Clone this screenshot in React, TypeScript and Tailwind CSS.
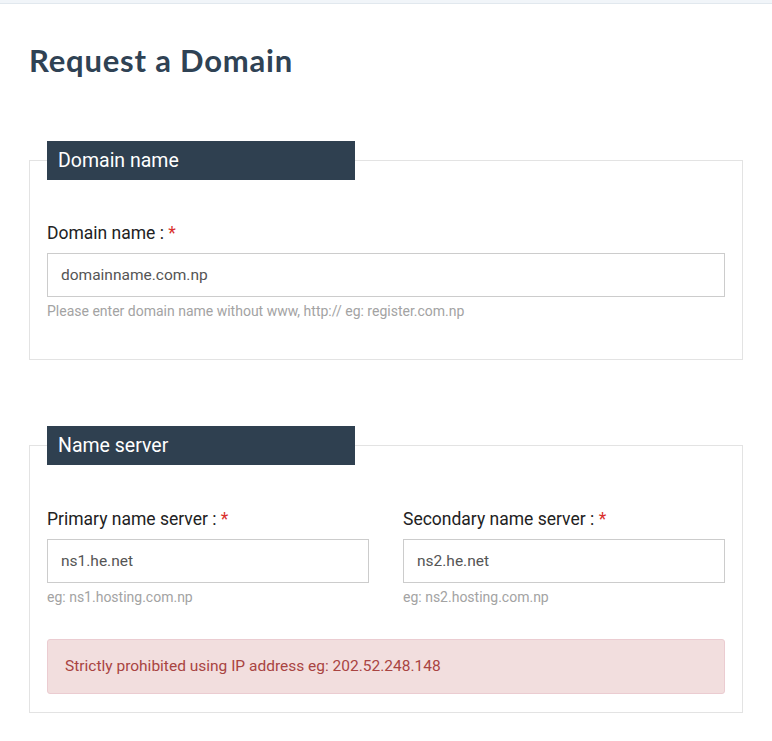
import React from 'react';

function Legend({ children }: { children: React.ReactNode }) {
  return (
    <legend className="w-[308px] h-[39px] bg-[#2f4050] px-[11px] text-[19.5px] leading-[39px] text-white">
      {children}
    </legend>
  );
}

function Field({
  label,
  value,
  help,
  className = '',
}: {
  label: string;
  value: string;
  help: string;
  className?: string;
}) {
  return (
    <div className={className}>
      <label className="block text-[17.5px] leading-[22px] text-[#222]">
        {label} : <span className="text-[#d9302c]">*</span>
      </label>
      <input
        readOnly
        value={value}
        className="mt-[9px] block h-[44px] w-full border border-[#cccccc] bg-white px-[13px] text-[15.5px] text-[#555] outline-none"
      />
      <p className="mt-[4px] text-[14px] leading-[20px] text-[#a3a3a3]">{help}</p>
    </div>
  );
}

export default function App() {
  return (
    <div className="min-h-[741px] bg-white font-['Roboto',sans-serif]">
      <div className="h-[4px] border-b border-[#e1e8ee] bg-[#f1f5f9]" />

      <div className="px-[29px]">
        <h1 className="mt-[34px] font-['Lato',sans-serif] text-[31px] font-bold leading-[44px] tracking-[0.8px] text-[#2f4254]">
          Request a Domain
        </h1>

        <fieldset className="mt-[59px] border border-[#e3e3e3] px-[17px] pb-[38px]">
          <Legend>Domain name</Legend>
          <Field
            className="mt-[42px]"
            label="Domain name"
            value="domainname.com.np"
            help="Please enter domain name without www, http:// eg: register.com.np"
          />
        </fieldset>

        <fieldset className="mt-[66px] border border-[#e3e3e3] px-[17px] pb-[18px]">
          <Legend>Name server</Legend>
          <div className="mt-[43px] grid grid-cols-2 gap-[34px]">
            <Field label="Primary name server" value="ns1.he.net" help="eg: ns1.hosting.com.np" />
            <Field label="Secondary name server" value="ns2.he.net" help="eg: ns2.hosting.com.np" />
          </div>
          <div className="mt-[32px] rounded-[3px] border border-[#ebccd1] bg-[#f2dede] px-[17px] py-[17px] text-[15.5px] leading-[19px] text-[#a94442]">
            Strictly prohibited using IP address eg: 202.52.248.148
          </div>
        </fieldset>
      </div>
    </div>
  );
}
